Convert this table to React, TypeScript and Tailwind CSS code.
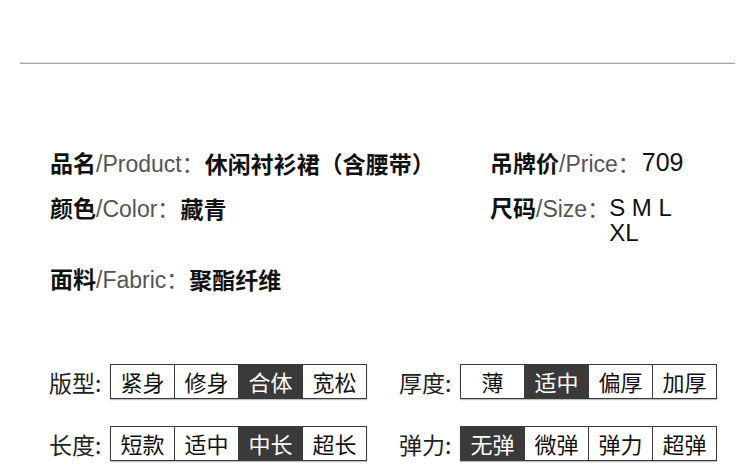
import React from "react";

const cjk = "font-['Noto_Sans_CJK_SC',sans-serif]";
const lat = "font-['Liberation_Sans','Noto_Sans_CJK_SC',sans-serif]";

function Label({ zh, en }: { zh: string; en: string }) {
  return (
    <span className="whitespace-nowrap">
      <span className={`${cjk} font-bold text-[23px] text-[#111]`}>{zh}</span>
      <span className={`${lat} text-[23px] text-[#555]`}>{en}</span>
      <span className={`${cjk} text-[22px] text-[#555]`}>：</span>
    </span>
  );
}

function Options({ label, items, active }: { label: string; items: string[]; active: number }) {
  return (
    <div className="flex items-center">
      <div className={`${cjk} w-[61px] text-[23px] leading-[34px] text-[#222]`}>{label}</div>
      <div className="flex border-l border-[#3a3a3a] shadow-[0_1px_1px_rgba(0,0,0,0.25)]">
        {items.map((t, i) => (
          <div
            key={t + i}
            className={`${cjk} flex h-[35px] w-[64px] items-center justify-center border-y border-r border-[#3a3a3a] text-[22px] ${
              i === active ? "bg-[#3a3a3a] text-white" : "bg-white text-[#111]"
            }`}
          >
            {t}
          </div>
        ))}
      </div>
    </div>
  );
}

export default function App() {
  return (
    <div className="h-[471px] w-[750px] overflow-hidden bg-white">
      <div className="pt-[62px]">
        <div className="ml-[20px] w-[715px]">
          <div className="h-px bg-[#e2e2e2]" />
          <div className="h-px bg-[#a6a6a6]" />
        </div>
      </div>

      <div className="mt-[84px] flex">
        <div className="w-[490px] pl-[50px]">
          <div className="flex h-[30px] items-center">
            <Label zh="品名" en="/Product" />
            <span className={`${cjk} ml-[1px] whitespace-nowrap text-[23px] font-bold text-[#111]`}>
              休闲衬衫裙
              <span className="inline-block w-[23px] text-center">（</span>
              含腰带
              <span className="inline-block w-[23px] text-center">）</span>
            </span>
          </div>
          <div className="mt-[15px] flex h-[30px] items-center">
            <Label zh="颜色" en="/Color" />
            <span className={`${cjk} ml-[1px] text-[23px] font-bold text-[#111]`}>藏青</span>
          </div>
          <div className="mt-[41px] flex h-[30px] items-center">
            <Label zh="面料" en="/Fabric" />
            <span className={`${cjk} ml-[1px] text-[23px] font-bold text-[#111]`}>聚酯纤维</span>
          </div>
        </div>
        <div>
          <div className="flex h-[30px] items-center">
            <Label zh="吊牌价" en="/Price" />
            <span className={`${lat} ml-[2px] text-[25px] text-[#111]`}>709</span>
          </div>
          <div className="mt-[15px] flex items-start">
            <div className="flex h-[30px] items-center">
              <Label zh="尺码" en="/Size" />
            </div>
            <div className={`${lat} mt-[2px] w-[90px] text-[24px] leading-[25px] text-[#111]`}>
              <div className="whitespace-nowrap">S M L</div>
              <div>XL</div>
            </div>
          </div>
        </div>
      </div>

      <div className="mt-[70px] flex pl-[49px]">
        <div className="w-[350px]">
          <Options label="版型:" items={["紧身", "修身", "合体", "宽松"]} active={2} />
        </div>
        <Options label="厚度:" items={["薄", "适中", "偏厚", "加厚"]} active={1} />
      </div>
      <div className="mt-[27px] flex pl-[49px]">
        <div className="w-[350px]">
          <Options label="长度:" items={["短款", "适中", "中长", "超长"]} active={2} />
        </div>
        <Options label="弹力:" items={["无弹", "微弹", "弹力", "超弹"]} active={0} />
      </div>
    </div>
  );
}
